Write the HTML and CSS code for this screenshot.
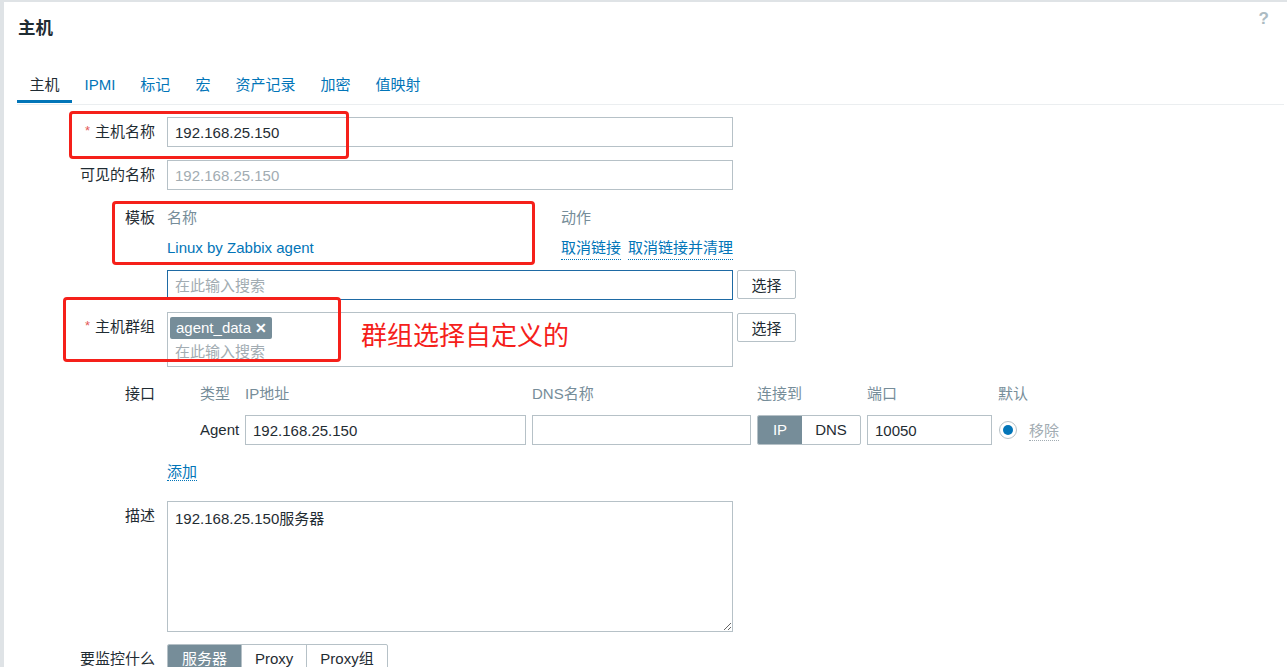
FILE: index.html
```html
<!DOCTYPE html>
<html lang="zh-CN">
<head>
    <meta charset="UTF-8">
    <meta name="viewport" content="width=device-width, initial-scale=1.0">
    <title>主机</title>
    <link rel="stylesheet" href="styles.css">
</head>
<body>

<div class="dialog">
    <div class="dialog-head">
        <h2>主机</h2>
        <span class="help">?</span>
    </div>

    <ul class="tabs">
        <li class="active">主机</li>
        <li>IPMI</li>
        <li>标记</li>
        <li>宏</li>
        <li>资产记录</li>
        <li>加密</li>
        <li>值映射</li>
    </ul>

    <div class="form">
        <div class="row row-first">
            <label class="req">主机名称</label>
            <div class="field"><input class="text" type="text" value="192.168.25.150"></div>
        </div>

        <div class="row">
            <label>可见的名称</label>
            <div class="field"><input class="text" type="text" placeholder="192.168.25.150"></div>
        </div>

        <div class="row">
            <label class="label-short">模板</label>
            <div class="field">
                <div class="tpl-table">
                    <div class="tpl-head">名称</div>
                    <div class="tpl-head">动作</div>
                    <div class="tpl-cell"><a class="link">Linux by Zabbix agent</a></div>
                    <div class="tpl-cell actions">
                        <a class="link dotted">取消链接</a>
                        <a class="link dotted">取消链接并清理</a>
                    </div>
                </div>
                <div class="with-btn">
                    <input class="text focused" type="text" placeholder="在此输入搜索">
                    <button class="btn">选择</button>
                </div>
            </div>
        </div>

        <div class="row row-group">
            <label class="req">主机群组</label>
            <div class="field with-btn top">
                <div class="multiselect">
                    <span class="tag">agent_data <b>✕</b></span>
                    <span class="ms-hint">在此输入搜索</span>
                </div>
                <button class="btn">选择</button>
            </div>
        </div>

        <div class="row row-iface">
            <label class="label-short">接口</label>
            <div class="field">
                <div class="iface">
                    <span></span>
                    <span class="ih">类型</span>
                    <span class="ih">IP地址</span>
                    <span class="ih">DNS名称</span>
                    <span class="ih">连接到</span>
                    <span class="ih">端口</span>
                    <span class="ih">默认</span>

                    <span></span>
                    <span class="itype">Agent</span>
                    <input class="text" type="text" value="192.168.25.150">
                    <input class="text" type="text" value="">
                    <div class="toggle">
                        <span class="on">IP</span>
                        <span>DNS</span>
                    </div>
                    <input class="text" type="text" value="10050">
                    <div class="default-cell">
                        <span class="radio"></span>
                        <a class="muted dotted">移除</a>
                    </div>
                </div>
                <div class="add-row"><a class="link dotted">添加</a></div>
            </div>
        </div>

        <div class="row row-desc">
            <label class="label-short">描述</label>
            <div class="field"><textarea class="text area" readonly>192.168.25.150服务器</textarea></div>
        </div>

        <div class="row row-last">
            <label>要监控什么</label>
            <div class="field">
                <div class="segment">
                    <span class="on">服务器</span>
                    <span>Proxy</span>
                    <span>Proxy组</span>
                </div>
            </div>
        </div>
    </div>
</div>

<!-- screenshot annotations -->
<div class="mark mark-name"></div>
<div class="mark mark-tpl"></div>
<div class="mark mark-group"></div>
<div class="note">群组选择自定义的</div>

</body>
</html>
```

FILE: styles.css
```css
/* General */
* {
    box-sizing: border-box;
}
html, body {
    height: 667px;
    overflow: hidden;
}
body {
    margin: 0;
    padding: 0;
    background-color: #dfe3e6;
    font-family: "Liberation Sans", "Noto Sans CJK SC", sans-serif;
    font-size: 15px;
    color: #1f2c33;
}
.dialog {
    margin: 2px 0 0 4px;
    height: 700px;
    background: #fff;
}

/* Header + tabs */
.dialog-head {
    position: relative;
    padding: 16px 14px 0;
    height: 67px;
}
.dialog-head h2 {
    margin: 0;
    font-size: 17.5px;
    line-height: 21px;
    font-weight: bold;
}
.help {
    position: absolute;
    top: 7px;
    right: 18px;
    color: #acbbc2;
    font-size: 17px;
    font-weight: bold;
}
.tabs {
    list-style: none;
    display: flex;
    margin: 0 3px 0 13px;
    padding: 0;
    border-bottom: 1px solid #ebeef0;
}
.tabs li {
    padding: 6px 12.5px 6px;
    line-height: 19px;
    color: #0275b8;
    border-bottom: 3px solid transparent;
    margin-bottom: 1px;
}
.tabs li.active {
    color: #1f2c33;
    border-bottom-color: #0275b8;
}

/* Form */
.form {
    padding: 12px 0 0 14px;
}
.row {
    display: grid;
    grid-template-columns: 137px 566px;
    column-gap: 12px;
    margin-top: 13px;
}
.row-first {
    margin-top: 0;
}
.row label {
    text-align: right;
    line-height: 30px;
    height: 30px;
}
.row label.label-short {
    line-height: 29px;
    height: 29px;
}
.row label.req::before {
    content: "*";
    color: #e45959;
    margin-right: 5px;
    font-size: 13px;
    line-height: 0;
    position: relative;
    top: -2px;
}
.text {
    display: block;
    width: 100%;
    height: 30px;
    padding: 0 7px;
    border: 1px solid #b6c1c7;
    border-radius: 0;
    font-family: inherit;
    font-size: 15px;
    color: #1f2c33;
    background: #fff;
}
.text::placeholder {
    color: #a2acb2;
}
.text.focused {
    border-color: #1e6aa4;
}
.link {
    color: #0275b8;
    text-decoration: none;
}
.muted {
    color: #a2acb2;
}
.dotted {
    border-bottom: 1px dotted currentColor;
}

/* Templates */
.tpl-table {
    display: grid;
    grid-template-columns: 394px 1fr;
}
.tpl-head {
    color: #768d99;
    line-height: 29px;
}
.tpl-cell {
    line-height: 32px;
    height: 32px;
}
.tpl-cell.actions {
    display: flex;
    gap: 7px;
}
.tpl-cell.actions .link {
    line-height: 18px;
    height: 21px;
    margin-top: 7px;
}
.with-btn {
    display: flex;
    gap: 4px;
    width: 629px;
    margin-top: 6px;
}
.with-btn.top {
    margin-top: 0;
    align-items: flex-start;
}
.with-btn .text,
.with-btn .multiselect {
    flex: 0 0 566px;
}
.btn {
    flex: 0 0 59px;
    height: 29px;
    border: 1px solid #b6c1c7;
    border-radius: 2px;
    background: #fff;
    font-family: inherit;
    font-size: 15px;
    color: #1f2c33;
    padding: 0;
}
.with-btn.top .btn {
    margin-top: 1px;
}

/* Host groups */
.row-group {
    margin-top: 12px;
}
.multiselect {
    height: 55px;
    border: 1px solid #b6c1c7;
    padding: 4px 2px 0;
}
.tag {
    display: inline-block;
    background: #768d99;
    color: #fff;
    border-radius: 2px;
    padding: 0 5px 0 6px;
    line-height: 21px;
}
.tag b {
    font-size: 14px;
}
.ms-hint {
    display: block;
    color: #a2acb2;
    padding-left: 5px;
    line-height: 18px;
    margin-top: 4px;
}

/* Interfaces */
.row-iface {
    margin-top: 13px;
}
.row-iface label.label-short {
    line-height: 27px;
    height: 27px;
}
.iface {
    display: grid;
    grid-template-columns: 27px 39px 281px 219px 104px 125px 100px;
    column-gap: 6px;
    row-gap: 8px;
    width: 900px;
}
.ih {
    color: #768d99;
    line-height: 27px;
    white-space: nowrap;
}
.itype {
    line-height: 30px;
}
.toggle {
    display: flex;
    height: 30px;
    border: 1px solid #b6c1c7;
    border-radius: 2px;
    overflow: hidden;
}
.toggle span {
    flex: 1;
    text-align: center;
    line-height: 28px;
}
.toggle span.on {
    flex: 0 0 44px;
    background: #768d99;
    color: #fff;
}
.default-cell {
    display: flex;
    align-items: center;
    gap: 12px;
    padding-left: 1px;
}
.radio {
    width: 18px;
    height: 18px;
    border: 1px solid #b6c1c7;
    border-radius: 50%;
    position: relative;
}
.radio::after {
    content: "";
    position: absolute;
    left: 3px;
    top: 3px;
    width: 10px;
    height: 10px;
    border-radius: 50%;
    background: #0275b8;
}
.add-row {
    margin-top: 15px;
    line-height: 24px;
}

/* Description */
.row-desc {
    margin-top: 17px;
}
.area {
    height: 131px;
    padding: 7px 7px;
    resize: vertical;
    line-height: 19px;
}

/* Monitored by */
.row-last {
    margin-top: 12px;
}
.segment {
    display: inline-flex;
    border: 1px solid #b6c1c7;
    border-radius: 2px;
    overflow: hidden;
    height: 30px;
}
.segment span {
    line-height: 28px;
    padding: 0 13px;
    border-left: 1px solid #b6c1c7;
}
.segment span:first-child {
    border-left: none;
    padding: 0 14px;
}
.segment span.on {
    background: #768d99;
    color: #fff;
}

/* Annotations drawn over the screenshot */
.mark {
    position: absolute;
    border: 3px solid #f5201a;
    border-radius: 4px;
}
.mark-name {
    left: 69px;
    top: 111px;
    width: 280px;
    height: 48px;
}
.mark-tpl {
    left: 112px;
    top: 201px;
    width: 423px;
    height: 64px;
}
.mark-group {
    left: 63px;
    top: 297px;
    width: 278px;
    height: 65px;
}
.note {
    position: absolute;
    left: 361px;
    top: 318px;
    color: #f5201a;
    font-size: 26px;
    line-height: 32px;
    font-family: "Noto Sans CJK SC", sans-serif;
}
```
